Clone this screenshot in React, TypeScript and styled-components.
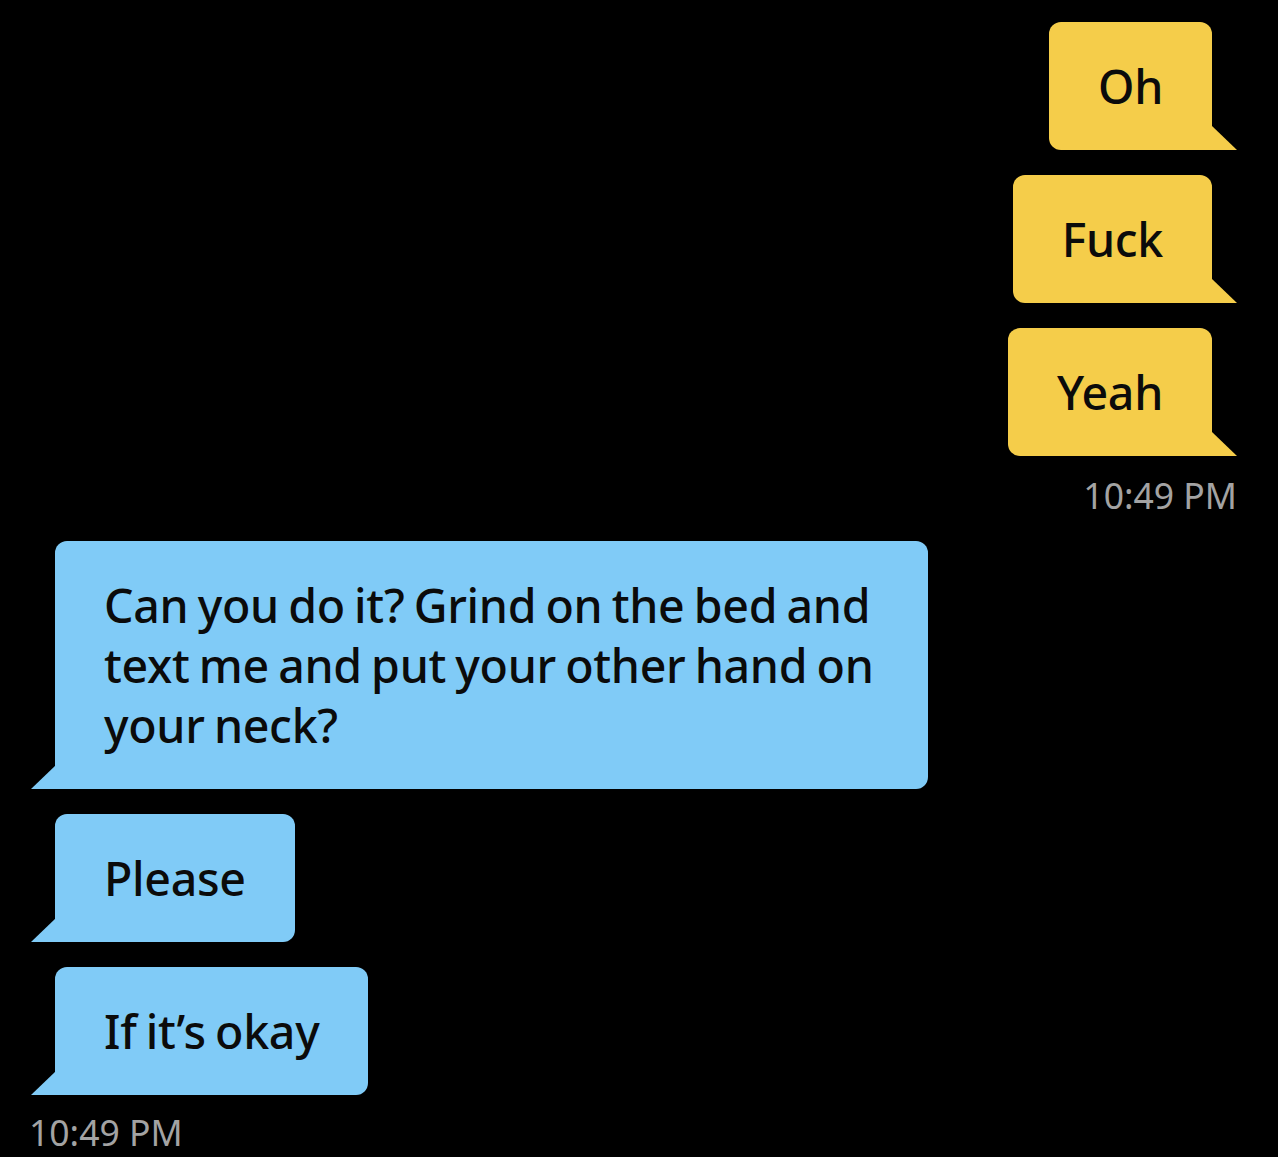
import styled, { createGlobalStyle, css } from 'styled-components';

type Side = 'out' | 'in';

const GlobalStyle = createGlobalStyle`
  html, body {
    margin: 0;
    background: #000;
  }
  body {
    font-family: 'Noto Sans', 'Open Sans', sans-serif;
  }
`;

const messages: { side: Side; lines: string[]; time: string }[] = [
  { side: 'out', lines: ['Oh', 'Fuck', 'Yeah'], time: '10:49 PM' },
  {
    side: 'in',
    lines: [
      'Can you do it? Grind on the bed and text me and put your other hand on your neck?',
      'Please',
      'If it’s okay',
    ],
    time: '10:49 PM',
  },
];

const App = () => {
  return (
    <>
      <GlobalStyle />
      <Thread>
        {messages.map((group, i) => (
          <Group key={i} $side={group.side}>
            {group.lines.map((line, j) => (
              <Bubble key={j} $side={group.side}>
                {line}
              </Bubble>
            ))}
            <Time $side={group.side}>{group.time}</Time>
          </Group>
        ))}
      </Thread>
    </>
  );
};

export default App;

const Thread = styled.main`
  display: flex;
  flex-direction: column;
  gap: 26px;
  padding: 22px 41px 0 31px;
  min-height: 1157px;
  box-sizing: border-box;
`;

const Group = styled.section<{ $side: Side }>`
  display: flex;
  flex-direction: column;
  gap: 25px;
  align-items: ${(p) => (p.$side === 'out' ? 'flex-end' : 'flex-start')};
`;

const Bubble = styled.div<{ $side: Side }>`
  position: relative;
  max-width: 775px;
  padding: 34px 49px;
  font-size: 46.5px;
  line-height: 60px;
  font-weight: 500;
  color: #0b0b0b;
  letter-spacing: -0.3px;
  word-spacing: -2.5px;
  border-radius: 12px;

  &::after {
    content: '';
    position: absolute;
    bottom: 0;
    width: 25px;
    height: 24px;
    background: inherit;
  }

  ${(p) =>
    p.$side === 'out'
      ? css`
          margin-right: 25px;
          background: #f5cd4a;
          border-bottom-right-radius: 0;
          &::after {
            right: -25px;
            clip-path: polygon(0 0, 100% 100%, 0 100%);
          }
        `
      : css`
          margin-left: 24px;
          background: #80cbf7;
          border-bottom-left-radius: 0;
          &::after {
            left: -24px;
            clip-path: polygon(100% 0, 100% 100%, 0 100%);
          }
        `}
`;

const Time = styled.div<{ $side: Side }>`
  margin-top: ${(p) => (p.$side === 'out' ? '-6px' : '-8px')};
  font-size: 35.5px;
  line-height: 40px;
  color: #a3a3a3;
  ${(p) => (p.$side === 'in' ? 'margin-left: -2px;' : '')}
`;
